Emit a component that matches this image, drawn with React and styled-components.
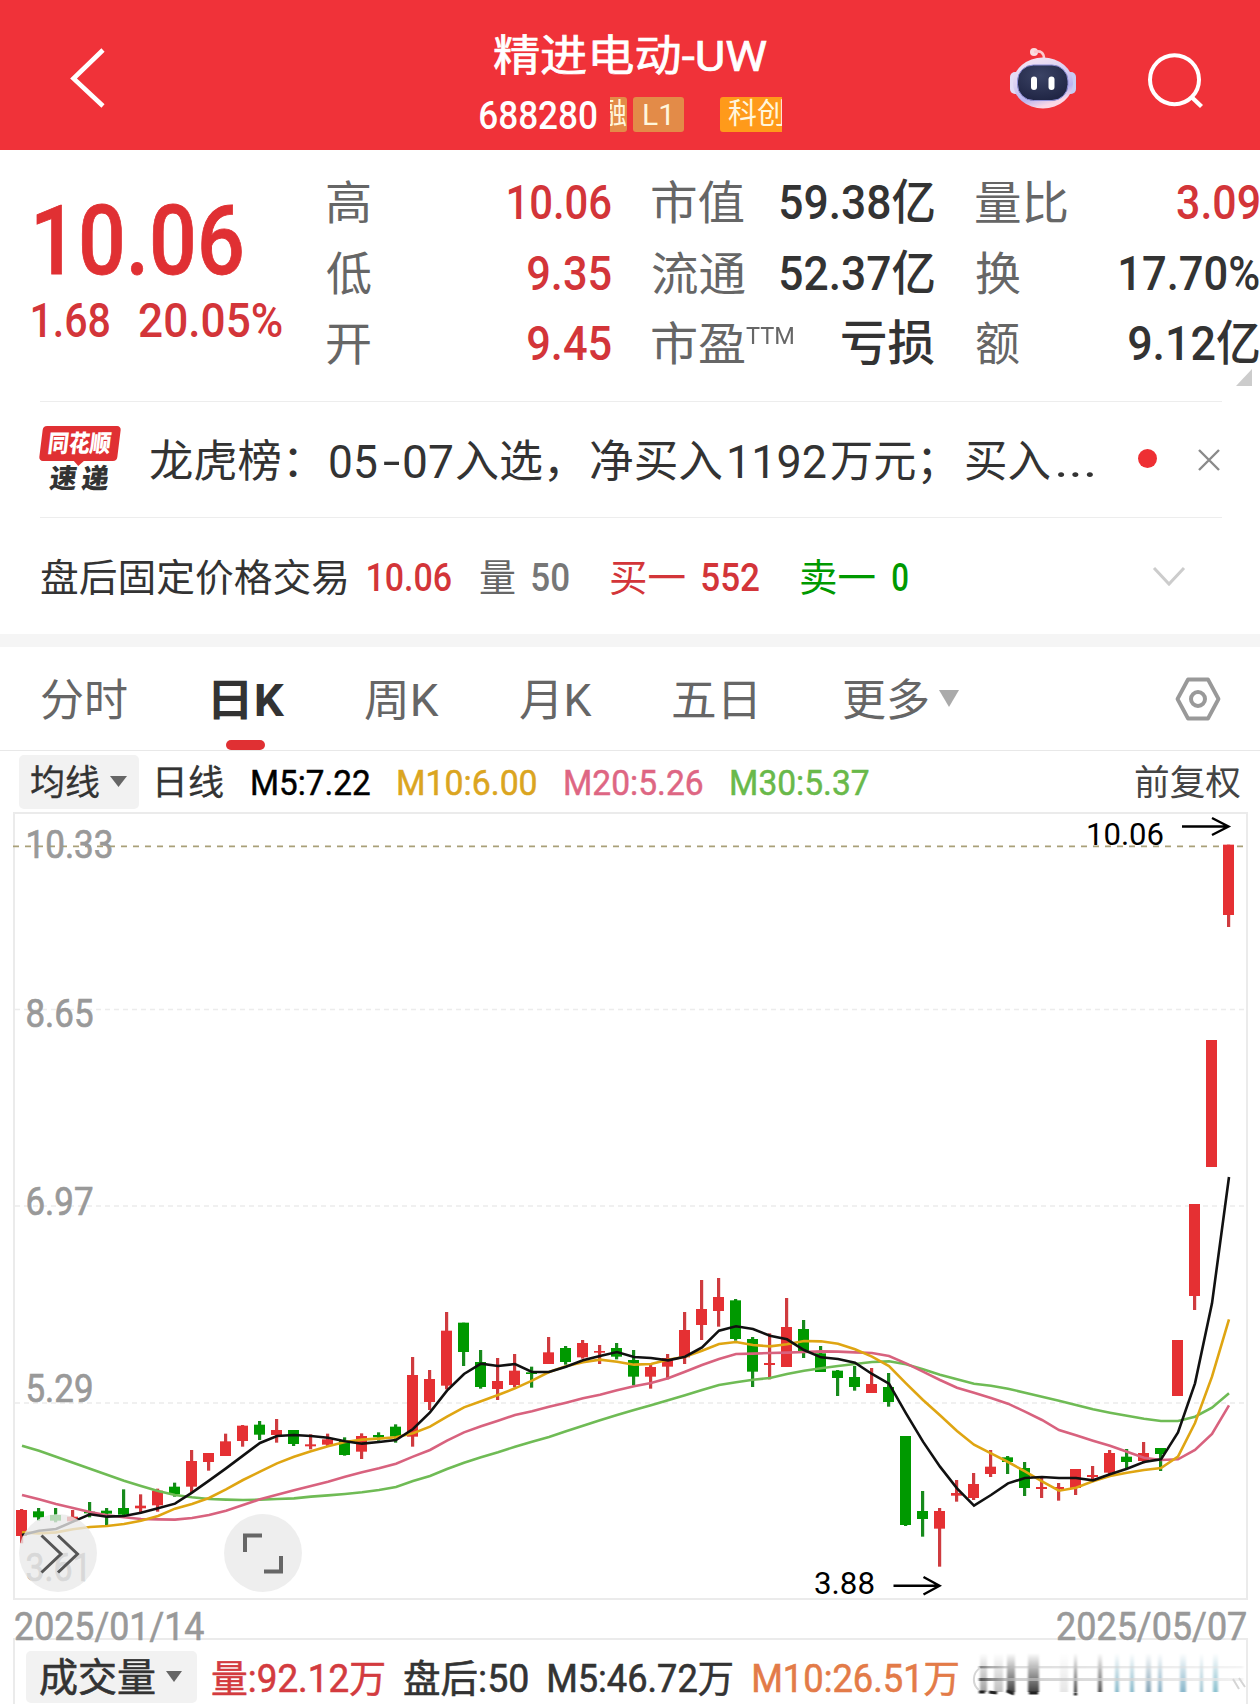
import React, { useLayoutEffect, useRef } from 'react';
import styled, { createGlobalStyle } from 'styled-components';

const RED = '#e03033';
const GREEN = '#009900';
const FONT = `Roboto, 'Noto Sans CJK SC', sans-serif`;

const GlobalStyle = createGlobalStyle`
  * {
    box-sizing: border-box;
  }
  body {
    margin: 0;
    background: #fff;
    font-family: ${FONT};
    color: #333;
  }
`;

/* ---------- text that is condensed to a given width ---------- */

const FitBox = styled.span`
  display: block;
  flex: none;
  width: ${(props) => props.$w}px;
  margin-left: ${(props) => props.$ml || 0}px;
  height: ${(props) => props.$size}px;
  line-height: ${(props) => props.$size + 4}px;
  font-size: ${(props) => props.$size}px;
  font-weight: ${(props) => props.$weight || 400};
  color: ${(props) => props.$color || 'inherit'};
  -webkit-text-stroke: ${(props) => props.$stroke || 0}px;
  white-space: nowrap;

  span {
    display: inline-block;
    transform-origin: 0 50%;
  }
`;

function Fit({ w, ml, size, weight, stroke, color, children }) {
  const ref = useRef(null);

  useLayoutEffect(() => {
    const el = ref.current;
    const style = getComputedStyle(el);
    const ctx = document.createElement('canvas').getContext('2d');
    ctx.font = `${style.fontWeight} ${style.fontSize} ${style.fontFamily}`;
    const m = ctx.measureText(children);
    const ink = m.actualBoundingBoxRight + m.actualBoundingBoxLeft;
    const k = w / ink;
    el.style.transform = `translateX(${m.actualBoundingBoxLeft * k}px) scaleX(${k})`;
  }, [w, size, weight, children]);

  return (
    <FitBox $w={w} $ml={ml} $size={size} $weight={weight} $stroke={stroke} $color={color}>
      <span ref={ref}>{children}</span>
    </FitBox>
  );
}

/* ---------- layout ---------- */

const Page = styled.div`
  width: 1260px;
  height: 1704px;
  overflow: hidden;
  background: #fff;
`;

const Header = styled.header`
  display: flex;
  height: 150px;
  background: #f03239;
  color: #fff;

  svg {
    flex: none;
  }
`;

const BackIcon = styled.svg`
  margin: 46px 0 0 68px;
`;

const TitleBlock = styled.div`
  width: 304px;
  margin-left: 371px;
  padding-top: 33px;
`;

const CodeRow = styled.div`
  display: flex;
  align-items: center;
  height: 36px;
  margin-top: 20px;
`;

const Tag = styled.span`
  display: flex;
  align-items: center;
  justify-content: ${(props) => props.$justify || 'flex-start'};
  flex: none;
  width: ${(props) => props.$w}px;
  height: 35px;
  margin-left: ${(props) => props.$ml}px;
  padding-left: ${(props) => props.$pl || 0}px;
  background: ${(props) => props.$bg || '#e38b48'};
  border-radius: ${(props) => props.$radius || '3px'};
  color: #fff6dc;
  font-size: ${(props) => props.$size || 29}px;
  line-height: 35px;
  white-space: nowrap;
  overflow: hidden;
`;

const RobotIcon = styled.svg`
  margin: 46px 0 0 228px;
`;

const SearchIcon = styled.svg`
  margin: 51px 0 0 68px;
`;

const Quote = styled.section`
  position: relative;
  display: flex;
  height: 251px;
  padding-top: 16px;
`;

const PriceColumn = styled.div`
  width: 327px;
  padding: 25px 0 0 32px;
`;

const ChangeRow = styled.div`
  display: flex;
  margin-top: 7px;
`;

const StatColumn = styled.div`
  width: ${(props) => props.$w}px;
  margin-right: ${(props) => props.$mr || 0}px;
`;

const Stat = styled.div`
  display: flex;
  align-items: center;
  justify-content: space-between;
  height: 70.5px;
  color: #666;
`;

const StatLabel = styled.span`
  display: flex;
`;

const Sup = styled.span`
  padding-top: 3px;
`;

const Corner = styled.span`
  position: absolute;
  right: 8px;
  bottom: 15px;
  border-left: 16px solid transparent;
  border-bottom: 17px solid #ccc;
`;

const NewsRow = styled.section`
  display: flex;
  align-items: center;
  height: 117px;
  margin: 0 38px 0 40px;
  border-top: 1.5px solid #ededed;
  border-bottom: 1.5px solid #ededed;
`;

const Logo = styled.div`
  flex: none;
  width: 82px;
  height: 68px;
  margin-top: 1px;
`;

const LogoBadge = styled.div`
  position: relative;
  display: flex;
  align-items: center;
  justify-content: center;
  width: 78px;
  height: 35px;
  margin-left: 1px;
  padding-bottom: 3px;
  background: ${RED};
  border-radius: 4px;
  color: #fff;
  transform: skewX(-7deg);

  &::after {
    content: '';
    position: absolute;
    left: 34px;
    top: 34px;
    border: 6px solid transparent;
    border-top-color: ${RED};
    border-bottom: none;
  }
`;

const LogoWord = styled.div`
  display: flex;
  margin: 3px 0 0 10px;
  transform: skewX(-7deg);
`;

const Dot = styled.span`
  flex: none;
  width: 19px;
  height: 19px;
  margin: -2px 0 0 44px;
  border-radius: 50%;
  background: #ee2f33;
`;

const CloseIcon = styled.svg`
  flex: none;
  margin-left: 40px;
`;

const AfterHours = styled.section`
  display: flex;
  align-items: center;
  height: 116px;
  padding-left: 41px;
`;

const ChevronDown = styled.svg`
  margin: 2px 0 0 244px;
`;

const Band = styled.div`
  height: 13px;
  background: #f5f5f5;
`;

const Tabs = styled.nav`
  display: flex;
  align-items: stretch;
  height: 104px;
  padding-left: 41px;
  border-bottom: 1px solid #e8e8e8;
`;

const Tab = styled.span`
  position: relative;
  display: flex;
  align-items: center;
  margin-left: ${(props) => props.$ml || 0}px;
  color: #666;

  &::after {
    content: '';
    display: ${(props) => (props.$active ? 'block' : 'none')};
    position: absolute;
    left: 13px;
    bottom: 0;
    width: 39px;
    height: 10px;
    border-radius: 5px;
    background: ${RED};
  }
`;

const Triangle = styled.span`
  flex: none;
  width: ${(props) => props.$w}px;
  height: ${(props) => props.$h}px;
  margin-left: ${(props) => props.$ml}px;
  background: ${(props) => props.$color};
  clip-path: polygon(0 0, 100% 0, 50% 100%);
`;

const SettingsIcon = styled.svg`
  align-self: center;
  margin-left: 216px;
`;

const LegendRow = styled.div`
  display: flex;
  align-items: center;
  height: 61px;
  padding-left: 19px;
`;

const Select = styled.span`
  display: flex;
  align-items: center;
  flex: none;
  width: ${(props) => props.$w}px;
  height: ${(props) => props.$h}px;
  padding-left: ${(props) => props.$pl}px;
  background: #f2f2f2;
  border-radius: 5px;
`;

const ChartPanel = styled.section`
  position: relative;
  width: 1235px;
  height: 788px;
  margin-left: 13px;
  border: 2px solid #ebebeb;

  > svg {
    display: block;
    margin: -2px;
  }
`;

const RoundButton = styled.button`
  position: absolute;
  left: ${(props) => props.$left}px;
  top: 700px;
  width: 78px;
  height: 78px;
  padding: 0;
  border: none;
  border-radius: 50%;
  background: rgba(233, 233, 233, 0.78);

  svg {
    display: block;
  }
`;

const DateRow = styled.div`
  display: flex;
  align-items: center;
  justify-content: space-between;
  height: 38px;
  padding: 11px 14px 0 15px;
  color: #999;
`;

const VolumePanel = styled.section`
  display: flex;
  align-items: center;
  width: 1235px;
  height: 73px;
  margin-left: 13px;
  padding: 2px 0 0 11px;
  border: 2px solid #ebebeb;
  border-bottom: none;
`;

const SmearStrip = styled.svg`
  flex: none;
  margin-left: 12px;
`;

/* ---------- chart data ---------- */

// one row per day: up/down, high, body top, body bottom, low (thirds of a pixel below the 1260 line)
const candles = [
  [1, 747, 750, 828, 850], [0, 744, 754, 772, 782], [0, 744, 765, 782, 787], [1, 750, 770, 784, 787],
  [0, 726, 755, 760, 772], [0, 744, 752, 761, 795], [0, 688, 744, 764, 770], [1, 703, 737, 745, 758],
  [1, 686, 692, 736, 755], [0, 668, 680, 703, 710], [1, 570, 603, 680, 698], [1, 579, 579, 606, 632],
  [1, 521, 544, 588, 588], [1, 495, 497, 543, 560], [0, 483, 494, 524, 540], [1, 477, 510, 525, 548],
  [0, 510, 510, 552, 558], [1, 523, 553, 559, 568], [1, 521, 538, 554, 560], [0, 532, 543, 585, 587],
  [1, 520, 528, 575, 597], [0, 517, 525, 532, 542], [0, 493, 500, 530, 548], [1, 291, 345, 530, 560],
  [1, 330, 357, 426, 450], [1, 156, 212, 377, 388], [0, 188, 188, 276, 318], [0, 270, 306, 381, 386],
  [1, 294, 363, 387, 420], [1, 282, 332, 375, 382], [0, 320, 337, 342, 383], [1, 231, 277, 312, 312],
  [0, 258, 264, 306, 314], [1, 240, 249, 292, 296], [1, 255, 273, 278, 312], [0, 249, 264, 290, 298],
  [0, 270, 300, 350, 376], [1, 315, 321, 350, 386], [1, 282, 294, 320, 358], [1, 156, 210, 292, 312],
  [1, 60, 147, 195, 240], [1, 54, 111, 153, 200], [0, 117, 121, 237, 242], [0, 231, 237, 335, 381],
  [1, 220, 309, 315, 358], [1, 114, 201, 321, 321], [0, 180, 207, 276, 294], [0, 258, 280, 336, 336],
  [0, 330, 332, 354, 408], [0, 318, 351, 381, 392], [1, 324, 372, 399, 399], [0, 339, 381, 426, 440],
  [0, 528, 528, 795, 798], [0, 693, 753, 777, 830], [1, 744, 753, 806, 920], [1, 660, 699, 707, 725],
  [1, 639, 672, 714, 720], [1, 570, 620, 642, 651], [0, 588, 592, 606, 642], [0, 606, 624, 684, 708],
  [1, 650, 681, 687, 714], [1, 669, 681, 687, 722], [1, 627, 627, 684, 705], [1, 618, 645, 651, 660],
  [1, 570, 579, 638, 642], [0, 567, 590, 606, 624], [1, 546, 579, 603, 610], [0, 564, 564, 582, 633],
  [1, 240, 240, 408, 408], [1, -168, -168, 108, 150], [1, -660, -660, -279, -279], [1, -1246, -1246, -1035, -999],
];

const averages = [
  {
    color: '#6fbb55',
    values: [
      557, 572, 590, 608, 626, 644, 662, 678, 693, 705, 712, 717, 719, 720, 719, 717, 715, 710, 706, 702, 697, 690,
      681, 663, 648, 627, 608, 592, 577, 560, 545, 531, 514, 497, 481, 465, 450, 436, 421, 406, 390, 375, 367, 359,
      354, 342, 332, 325, 318, 312, 306, 304, 313, 328, 344, 358, 371, 377, 386, 398, 410, 422, 435, 448, 458, 467,
      476, 483, 483, 470, 443, 400,
    ],
  },
  {
    color: '#d8627e',
    values: [
      705, 718, 732, 744, 756, 766, 772, 777, 778, 779, 774, 765, 752, 735, 718, 704, 691, 678, 665, 650, 637, 625,
      611, 590, 570, 542, 517, 499, 482, 465, 454, 440, 428, 415, 404, 391, 379, 369, 355, 335, 315, 297, 282, 281,
      279, 278, 276, 274, 275, 277, 279, 288, 310, 335, 360, 383, 398, 414, 431, 455, 480, 510, 526, 542, 557, 575,
      593, 600, 598, 570, 522, 436,
    ],
  },
  {
    color: '#dfa512',
    values: [
      817, 820, 817, 808, 801, 798, 792, 782, 768, 746, 732, 714, 688, 660, 635, 610, 590, 574, 559, 546, 539, 536,
      532, 520, 500, 470, 442, 424, 405, 385, 362, 336, 319, 307, 299, 305, 314, 312, 299, 290, 272, 252, 246, 255,
      259, 253, 243, 244, 251, 268, 290, 318, 370, 420, 466, 513, 554, 580, 606, 634, 664, 692, 683, 664, 648, 638,
      630, 624, 590, 489, 350, 178,
    ],
  },
  {
    color: '#111',
    values: [
      825, 812, 807, 785, 763, 770, 768, 758, 745, 731, 698, 662, 625, 587, 549, 528, 525, 528, 533, 544, 551, 546,
      540, 507, 457, 392, 342, 311, 318, 312, 336, 336, 320, 301, 288, 276, 291, 294, 301, 290, 262, 212, 199, 207,
      227, 238, 270, 292, 297, 308, 342, 371, 460, 545, 620, 685, 737, 705, 670, 654, 651, 654, 654, 661, 643, 626,
      606, 598, 517, 370, 130, -249,
    ],
  },
];

const gridLines = [1009.5, 1206, 1403];

const axisLabels = [
  { text: '10.33', y: 858, w: 88 },
  { text: '8.65', y: 1027, w: 68 },
  { text: '6.97', y: 1215, w: 68 },
  { text: '5.29', y: 1402, w: 68 },
  { text: '3.61', y: 1581, w: 66 },
];

const cx = (i) => 21.5 + 17 * i;
const cy = (v) => 1260 + v / 3;

function KLineChart() {
  return (
    <svg width="1235" height="788" viewBox="13 812 1235 788" fontFamily={FONT}>
      {gridLines.map((y) => (
        <line key={y} x1="15" x2="1246" y1={y} y2={y} stroke="#ececec" strokeWidth="1.5" strokeDasharray="5 4" />
      ))}
      <line x1="13" x2="1246" y1="846.3" y2="846.3" stroke="#a9a078" strokeWidth="1.8" strokeDasharray="6 6" />
      {axisLabels.map((l) => (
        <text
          key={l.text}
          x="25.5"
          y={l.y}
          fontSize="38.5"
          fill="#999"
          stroke="#999"
          strokeWidth="0.7"
          textLength={l.w}
          lengthAdjust="spacingAndGlyphs"
        >
          {l.text}
        </text>
      ))}
      {candles.map(([up, high, top, bottom, low], i) => (
        <g key={i} fill={up ? '#e53033' : GREEN}>
          <rect x={cx(i) - 1.5} y={cy(high)} width="3.2" height={(low - high) / 3} fill={up ? '#cf3b3f' : '#178a1c'} />
          <rect x={cx(i) - 5.5} y={cy(top)} width="11" height={(bottom - top) / 3} />
        </g>
      ))}
      {averages.map(({ color, values }) => (
        <polyline
          key={color}
          points={values.map((v, i) => `${cx(i) + 0.5},${cy(v)}`).join(' ')}
          fill="none"
          stroke={color}
          strokeWidth="2.6"
        />
      ))}
      <g fill="#000" fontSize="32">
        <text x="1086" y="844.5" textLength="78" lengthAdjust="spacingAndGlyphs">10.06</text>
        <text x="814" y="1593.5" textLength="61" lengthAdjust="spacingAndGlyphs">3.88</text>
      </g>
      <g fill="none" stroke="#000" strokeWidth="2.4">
        <path d="M1182 826.5H1228M1212 818L1228.5 826.5L1212 835" />
        <path d="M893.5 1585.7H939M923.5 1577L939.5 1585.7L923.5 1594.5" />
      </g>
    </svg>
  );
}

/* ---------- icons ---------- */

function Robot() {
  return (
    <RobotIcon width="68" height="66" viewBox="0 0 68 66">
      <defs>
        <linearGradient id="shell" x1="0" y1="0" x2="0.4" y2="1">
          <stop offset="0" stopColor="#fbe9f2" />
          <stop offset="0.5" stopColor="#d9d0f2" />
          <stop offset="0.8" stopColor="#b9b4f0" />
          <stop offset="1" stopColor="#fbd8e6" />
        </linearGradient>
        <radialGradient id="visor" cx="0.45" cy="0.3" r="0.8">
          <stop offset="0" stopColor="#3b4365" />
          <stop offset="1" stopColor="#1c2140" />
        </radialGradient>
      </defs>
      <circle cx="25" cy="6" r="4" fill="#fbdde0" />
      <path d="M25 6C32 4 35 7 35 13" fill="none" stroke="#fbc9ce" strokeWidth="2.6" />
      <rect x="1" y="26" width="12" height="22" rx="5" fill="#e3ddf5" />
      <rect x="55" y="26" width="12" height="22" rx="5" fill="#c7cdf4" />
      <ellipse cx="34" cy="37" rx="30" ry="25.5" fill="url(#shell)" />
      <rect x="8.500" y="19" width="50.500" height="35.500" rx="16" fill="url(#visor)" stroke="#8f8fd6" strokeWidth="1" />
      <rect x="22" y="30.500" width="6" height="13.500" rx="3" fill="#fff" />
      <rect x="39.500" y="30.500" width="6" height="13.500" rx="3" fill="#fff" />
    </RobotIcon>
  );
}

const smears = [
  [4, 7, '#999'], [18, 9, '#bbb'], [31, 8, '#333'], [52, 11, '#333'], [84, 8, '#e4e4e4'], [98, 3, '#333'],
  [122, 4, '#444'], [139, 4, '#7fb4c6'], [154, 4, '#7fb4c6'], [170, 5, '#7c9db0'], [182, 4, '#7fa9bf'],
  [204, 6, '#7fb0c6'], [224, 3, '#93bccb'], [237, 5, '#82bccb'],
];

function Smear() {
  return (
    <SmearStrip width="278" height="50" viewBox="-6 -1 278 50">
      <defs>
        <linearGradient id="fade" x1="0" y1="0" x2="0" y2="1">
          <stop offset="0" stopColor="#fff" stopOpacity="0" />
          <stop offset="1" stopColor="#fff" />
        </linearGradient>
        <mask id="fadeMask">
          <rect x="-6" y="0" width="278" height="42" fill="url(#fade)" />
        </mask>
        <linearGradient id="trail" x1="0" y1="0" x2="1" y2="0">
          <stop offset="0" stopColor="#222" />
          <stop offset="0.12" stopColor="#bbb" />
          <stop offset="1" stopColor="#ebebeb" />
        </linearGradient>
        <filter id="soft" x="-10%" y="-10%" width="120%" height="120%">
          <feGaussianBlur stdDeviation="1.1 0.5" />
        </filter>
      </defs>
      <g mask="url(#fadeMask)" filter="url(#soft)">
        {smears.map(([x, w, color]) => (
          <rect key={x} x={x} y="0" width={w} height="39" fill={color} />
        ))}
      </g>
      <g filter="url(#soft)">
        <rect x="3" y="13" width="264" height="2.400" fill="url(#trail)" opacity="0.5" />
        <rect x="3" y="25" width="264" height="3" fill="url(#trail)" opacity="0.7" />
        <path d="M3 39h6M13 39l8 1M31 38l7 3M53 40h9M98 41h3" stroke="#222" strokeWidth="3" />
      </g>
      <path d="M4 15C-4 20 -4 32 3 37M257 26l6 10M263 25l6 9" fill="none" stroke="#d5d5d5" strokeWidth="2" />
    </SmearStrip>
  );
}

/* ---------- page ---------- */

const statColumns = [
  {
    w: 284,
    mr: 41,
    rows: [
      { label: '高', lw: 43, value: '10.06', vw: 103, color: '#d33539' },
      { label: '低', lw: 44, value: '9.35', vw: 83, color: '#d33539' },
      { label: '开', lw: 43, value: '9.45', vw: 83, color: '#d33539' },
    ],
  },
  {
    w: 282,
    mr: 42,
    rows: [
      { label: '市值', lw: 92, value: '59.38亿', vw: 154 },
      { label: '流通', lw: 93, value: '52.37亿', vw: 154 },
      { label: '市盈', lw: 92, sup: 'TTM', value: '亏损', vw: 92 },
    ],
  },
  {
    w: 283,
    rows: [
      { label: '量比', lw: 91, value: '3.09', vw: 82, color: '#d33539' },
      { label: '换', lw: 44, value: '17.70%', vw: 139 },
      { label: '额', lw: 43, value: '9.12亿', vw: 130 },
    ],
  },
];

const newsParts = [
  { text: '龙虎榜：', w: 147, ml: 28 },
  { text: '05', w: 47, ml: 33, size: 46 },
  { text: '-', w: 17, ml: 6 },
  { text: '07', w: 48, ml: 4, size: 46 },
  { text: '入选，', w: 102, ml: 4 },
  { text: '净买入', w: 131, ml: 33 },
  { text: '1192', w: 97, ml: 7, size: 46 },
  { text: '万元；', w: 101, ml: 5 },
  { text: '买入', w: 84, ml: 34 },
  { text: '...', w: 36, ml: 8 },
];

export default function App() {
  return (
    <Page>
      <GlobalStyle />
      <Header>
        <BackIcon width="38" height="64" viewBox="0 0 38 64">
          <path d="M35 4L5.500 32.500L35 60" fill="none" stroke="#fff" strokeWidth="4.600" />
        </BackIcon>
        <TitleBlock>
          <Fit ml={17} w={273} size={43} stroke={0.7}>精进电动-UW</Fit>
          <CodeRow>
            <Fit ml={3} w={117} size={39} weight={500}>688280</Fit>
            <Tag $ml={13} $w={17} $justify="flex-end" $radius="0 3px 3px 0">融</Tag>
            <Tag $ml={6} $w={51} $pl={9} $size={30}>L1</Tag>
            <Tag $ml={36} $w={62} $pl={8} $bg="#ff9a1a" $radius="3px 0 0 3px">科创</Tag>
          </CodeRow>
        </TitleBlock>
        <Robot />
        <SearchIcon width="60" height="60" viewBox="0 0 60 60">
          <circle cx="29.500" cy="28.700" r="24.500" fill="none" stroke="#fff" strokeWidth="4" />
          <path d="M46.500 46L56.500 55.500" stroke="#fff" strokeWidth="4.400" />
        </SearchIcon>
      </Header>

      <Quote>
        <PriceColumn>
          <Fit ml={5} w={205} size={97} weight={500} stroke={0.8} color={RED}>10.06</Fit>
          <ChangeRow>
            <Fit w={77} size={48} weight={500} color="#d33539">1.68</Fit>
            <Fit ml={30} w={143} size={48} weight={500} color="#d33539">20.05%</Fit>
          </ChangeRow>
        </PriceColumn>
        {statColumns.map((col) => (
          <StatColumn key={col.w} $w={col.w} $mr={col.mr}>
            {col.rows.map((row) => (
              <Stat key={row.label}>
                <StatLabel>
                  <Fit w={row.lw} size={46}>{row.label}</Fit>
                  {row.sup && (
                    <Sup>
                      <Fit ml={2} w={47} size={24}>{row.sup}</Fit>
                    </Sup>
                  )}
                </StatLabel>
                <Fit w={row.vw} size={48} weight={500} color={row.color || '#333'}>{row.value}</Fit>
              </Stat>
            ))}
          </StatColumn>
        ))}
        <Corner />
      </Quote>

      <NewsRow>
        <Logo>
          <LogoBadge>
            <Fit w={62} size={24} weight={900}>同花顺</Fit>
          </LogoBadge>
          <LogoWord>
            <Fit w={27} size={27} weight={900}>速</Fit>
            <Fit ml={5} w={27} size={27} weight={900}>递</Fit>
          </LogoWord>
        </Logo>
        {newsParts.map((part) => (
          <Fit key={part.text} w={part.w} ml={part.ml} size={part.size || 44}>{part.text}</Fit>
        ))}
        <Dot />
        <CloseIcon width="24" height="24" viewBox="0 0 24 24">
          <path d="M2 2L22 22M22 2L2 22" stroke="#8a8a8a" strokeWidth="2.400" />
        </CloseIcon>
      </NewsRow>

      <AfterHours>
        <Fit w={306} size={38}>盘后固定价格交易</Fit>
        <Fit ml={21} w={83} size={39} weight={500} color="#d33539">10.06</Fit>
        <Fit ml={29} w={35} size={38} color="#666">量</Fit>
        <Fit ml={17} w={37} size={39} weight={500} color="#777">50</Fit>
        <Fit ml={42} w={74} size={38} color="#d33539">买一</Fit>
        <Fit ml={17} w={57} size={39} weight={500} color="#d33539">552</Fit>
        <Fit ml={42} w={74} size={38} color={GREEN}>卖一</Fit>
        <Fit ml={17} w={16} size={39} weight={500} color={GREEN}>0</Fit>
        <ChevronDown width="34" height="22" viewBox="0 0 34 22">
          <path d="M2 2L17 18L32 2" fill="none" stroke="#ccc" strokeWidth="3" />
        </ChevronDown>
      </AfterHours>

      <Band />

      <Tabs>
        <Tab><Fit w={86} size={44}>分时</Fit></Tab>
        <Tab $ml={86} $active><Fit w={72} size={44} weight={700} color="#333">日K</Fit></Tab>
        <Tab $ml={80}><Fit w={74} size={44}>周K</Fit></Tab>
        <Tab $ml={81}><Fit w={72} size={44}>月K</Fit></Tab>
        <Tab $ml={81}><Fit w={82} size={44}>五日</Fit></Tab>
        <Tab $ml={89}>
          <Fit w={84} size={44}>更多</Fit>
          <Triangle $w={20} $h={17} $ml={11} $color="#aaa" />
        </Tab>
        <SettingsIcon width="46" height="44" viewBox="0 0 46 44">
          <path d="M13 2.500H33L43.500 22L33 41.500H13L2.500 22Z" fill="none" stroke="#999" strokeWidth="3.800" strokeLinejoin="round" />
          <circle cx="23" cy="22" r="7" fill="none" stroke="#999" strokeWidth="4" />
        </SettingsIcon>
      </Tabs>

      <LegendRow>
        <Select $w={120} $h={54} $pl={12}>
          <Fit w={68} size={35} stroke={0.3}>均线</Fit>
          <Triangle $w={17} $h={11} $ml={11} $color="#666" />
        </Select>
        <Fit ml={19} w={65} size={35} stroke={0.3}>日线</Fit>
        <Fit ml={29} w={118} size={35} stroke={0.5} color="#000">M5:7.22</Fit>
        <Fit ml={28} w={138} size={35} stroke={0.5} color="#dba520">M10:6.00</Fit>
        <Fit ml={29} w={137} size={35} stroke={0.5} color="#de6683">M20:5.26</Fit>
        <Fit ml={29} w={138} size={35} stroke={0.5} color="#69b94a">M30:5.37</Fit>
        <Fit ml={266} w={105} size={35} color="#444">前复权</Fit>
      </LegendRow>

      <ChartPanel>
        <KLineChart />
        <RoundButton $left={4}>
          <svg width="78" height="78" viewBox="0 0 78 78" fill="none" stroke="#555" strokeWidth="3">
            <path d="M22.500 21.500L42 40L22.500 58.500M39 21.500L58.500 40L39 58.500" />
          </svg>
        </RoundButton>
        <RoundButton $left={209}>
          <svg width="78" height="78" viewBox="0 0 78 78" fill="none" stroke="#666" strokeWidth="4">
            <path d="M21 38V21.500H38M57 42V57.500H40" />
          </svg>
        </RoundButton>
      </ChartPanel>

      <DateRow>
        <Fit w={189} size={38} stroke={0.6}>2025/01/14</Fit>
        <Fit w={189} size={38} stroke={0.6}>2025/05/07</Fit>
      </DateRow>

      <VolumePanel>
        <Select $w={171} $h={52} $pl={14}>
          <Fit w={115} size={39} stroke={0.6}>成交量</Fit>
          <Triangle $w={16} $h={11} $ml={11} $color="#666" />
        </Select>
        <Fit ml={15} w={172} size={38} stroke={0.6} color="#d33b3f">量:92.12万</Fit>
        <Fit ml={20} w={124} size={38} stroke={0.6}>盘后:50</Fit>
        <Fit ml={21} w={183} size={38} stroke={0.6}>M5:46.72万</Fit>
        <Fit ml={22} w={204} size={38} stroke={0.6} color="#e37b48">M10:26.51万</Fit>
        <Smear />
      </VolumePanel>
    </Page>
  );
}
